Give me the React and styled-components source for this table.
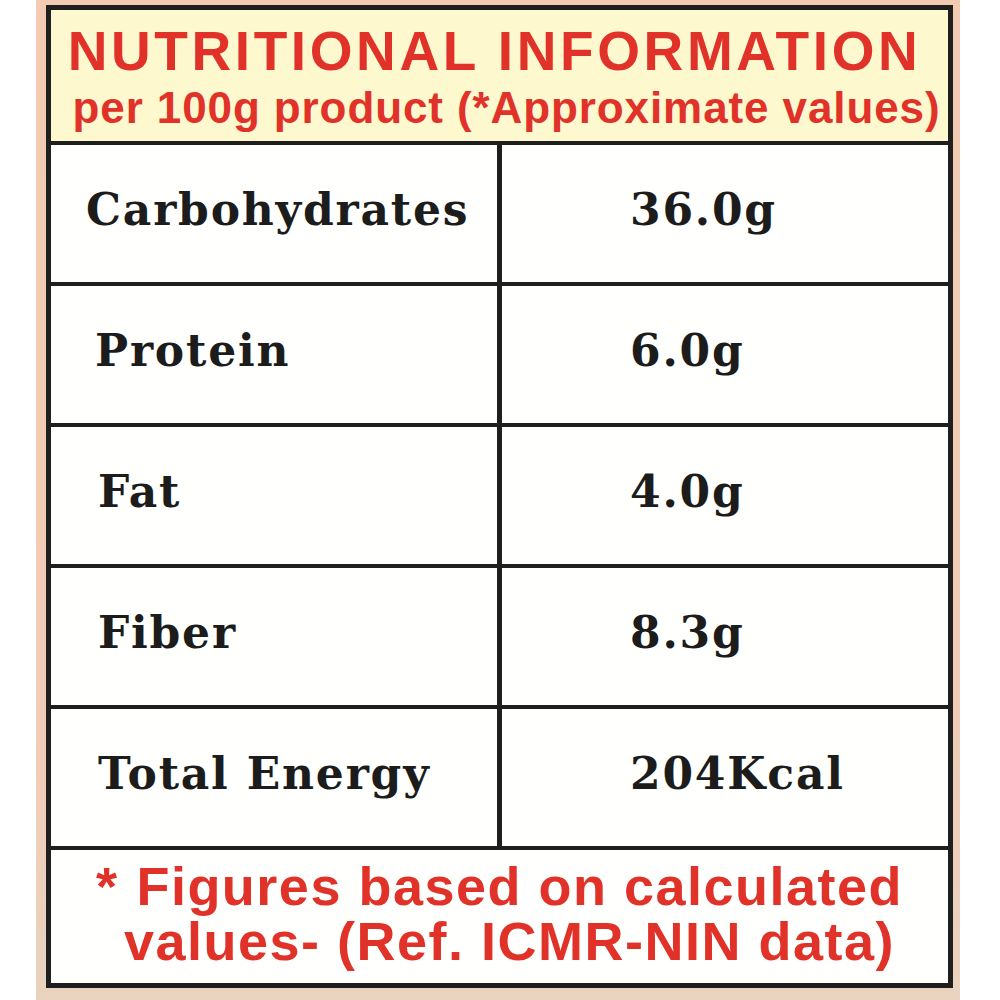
import React from 'react';
import styled, { createGlobalStyle } from 'styled-components';

const RED = '#e1322a';
const INK = '#1c1c1c';
const LINE = '#1f1f1f';

const GlobalStyle = createGlobalStyle`
    html, body {
        margin: 0;
        padding: 0;
        background: #ffffff;
    }
    #root {
        width: 1000px;
        height: 1000px;
    }
`;

const Backdrop = styled.div`
    margin-left: 36px;
    width: 924px;
    height: 1000px;
    box-sizing: border-box;
    padding: 5px 7px 12px 10px;
    background: linear-gradient(180deg, #f3cbb3 0%, #f1ccb6 70%, #e9d3bf 100%);
`;

const Label = styled.div`
    height: 983px;
    box-sizing: border-box;
    border: 5px solid ${LINE};
    display: flex;
    flex-direction: column;
    background: #fffffd;
`;

const Header = styled.header`
    height: 135px;
    box-sizing: border-box;
    padding-top: 13px;
    border-bottom: 4px solid ${LINE};
    background: #fef8cf;
    color: ${RED};
    font-family: "Liberation Sans", Arial, sans-serif;
    font-weight: 700;
    display: flex;
    flex-direction: column;
    align-items: center;
`;

const Title = styled.h1`
    margin: 0 10px 0 0;
    font-size: 55px;
    line-height: 57px;
    letter-spacing: 3.6px;
    font-weight: 700;
    white-space: nowrap;
`;

const Subtitle = styled.div`
    margin-top: 4px;
    font-size: 44px;
    line-height: 48px;
    letter-spacing: 0.9px;
    white-space: nowrap;
    padding-left: 14px;
`;

const Row = styled.div`
    height: 141px;
    box-sizing: border-box;
    border-bottom: 4px solid ${LINE};
    display: grid;
    grid-template-columns: 451px 1fr;
    font-family: "DejaVu Serif", "Liberation Serif", serif;
    font-weight: 700;
    color: ${INK};
`;

const Cell = styled.div`
    display: flex;
    align-items: center;
    padding-bottom: 8px;
    font-size: 44px;
    letter-spacing: 1.8px;
    white-space: nowrap;
`;

const Name = styled(Cell)`
    border-right: 5px solid ${LINE};
    padding-left: ${(p) => p.$indent}px;
`;

const Amount = styled(Cell)`
    padding-left: 128px;
`;

const Footnote = styled.footer`
    flex: 1;
    display: flex;
    flex-direction: column;
    align-items: center;
    justify-content: center;
    padding-bottom: 6px;
    color: ${RED};
    font-family: "Liberation Sans", Arial, sans-serif;
    font-weight: 700;
    font-size: 54px;
    line-height: 55px;
    letter-spacing: 1.5px;
`;

const NoteLine = styled.div`
    white-space: nowrap;
    padding-left: ${(p) => p.$shift || 0}px;
`;

const Star = styled.span`
    margin-right: 18px;
`;

const nutrients = [
    { name: 'Carbohydrates', value: '36.0g', indent: 35 },
    { name: 'Protein', value: '6.0g', indent: 44 },
    { name: 'Fat', value: '4.0g', indent: 47 },
    { name: 'Fiber', value: '8.3g', indent: 47 },
    { name: 'Total Energy', value: '204Kcal', indent: 47 },
];

const App = () => {
    return (
        <>
            <GlobalStyle />
            <Backdrop>
                <Label>
                    <Header>
                        <Title>NUTRITIONAL INFORMATION</Title>
                        <Subtitle>per 100g product (*Approximate values)</Subtitle>
                    </Header>
                    {nutrients.map((n) => (
                        <Row key={n.name}>
                            <Name $indent={n.indent}>{n.name}</Name>
                            <Amount>{n.value}</Amount>
                        </Row>
                    ))}
                    <Footnote>
                        <NoteLine><Star>*</Star>Figures based on calculated</NoteLine>
                        <NoteLine $shift={20}>values- (Ref. ICMR-NIN data)</NoteLine>
                    </Footnote>
                </Label>
            </Backdrop>
        </>
    );
};

export default App;
